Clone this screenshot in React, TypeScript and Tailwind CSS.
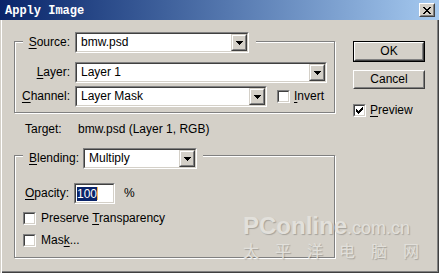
import React from "react";

function U({ c }: { c: string }) {
  return <span className="underline decoration-1 underline-offset-[2px]">{c}</span>;
}

function Arrow() {
  return (
    <svg width="7" height="4" viewBox="0 0 7 4" shapeRendering="crispEdges" fill="#000">
      <rect x="0" y="0" width="7" height="1" />
      <rect x="1" y="1" width="5" height="1" />
      <rect x="2" y="2" width="3" height="1" />
      <rect x="3" y="3" width="1" height="1" />
    </svg>
  );
}

function DropButton() {
  return (
    <div className="h-full w-[16px] shrink-0 border border-t-[#d4d0c8] border-l-[#d4d0c8] border-r-[#404040] border-b-[#404040] bg-[#d4d0c8]">
      <div className="flex h-full w-full items-center justify-center border border-t-white border-l-white border-r-[#808080] border-b-[#808080]">
        <Arrow />
      </div>
    </div>
  );
}

function Combo({ value, width }: { value: string; width: string }) {
  return (
    <div className={`h-[21px] shrink-0 border border-t-[#808080] border-l-[#808080] border-r-white border-b-white ${width}`}>
      <div className="flex h-full w-full border border-t-[#404040] border-l-[#404040] border-r-[#d4d0c8] border-b-[#d4d0c8] bg-white">
        <div className="flex-1 whitespace-nowrap pl-[4px] leading-[17px]">{value}</div>
        <DropButton />
      </div>
    </div>
  );
}

function CheckGlyph() {
  return (
    <svg width="7" height="7" viewBox="0 0 7 7" shapeRendering="crispEdges" fill="#000">
      <rect x="6" y="0" width="1" height="1" />
      <rect x="5" y="1" width="2" height="1" />
      <rect x="0" y="2" width="1" height="1" />
      <rect x="4" y="2" width="3" height="1" />
      <rect x="0" y="3" width="2" height="1" />
      <rect x="3" y="3" width="3" height="1" />
      <rect x="0" y="4" width="5" height="1" />
      <rect x="1" y="5" width="3" height="1" />
      <rect x="2" y="6" width="1" height="1" />
    </svg>
  );
}

function Checkbox({ checked }: { checked?: boolean }) {
  return (
    <div className="h-[13px] w-[13px] shrink-0 border border-t-[#808080] border-l-[#808080] border-r-white border-b-white">
      <div className="flex h-full w-full items-center justify-center border border-t-[#404040] border-l-[#404040] border-r-[#d4d0c8] border-b-[#d4d0c8] bg-white">
        {checked && <CheckGlyph />}
      </div>
    </div>
  );
}

function Face({ children }: { children: React.ReactNode }) {
  return (
    <div className="h-full w-full border border-t-white border-l-white border-r-[#404040] border-b-[#404040]">
      <div className="flex h-full w-full items-center justify-center border border-t-[#d4d0c8] border-l-[#d4d0c8] border-r-[#808080] border-b-[#808080]">
        {children}
      </div>
    </div>
  );
}

function CloseGlyph() {
  return (
    <svg width="8" height="7" viewBox="0 0 8 7" shapeRendering="crispEdges" fill="#000">
      <rect x="0" y="0" width="2" height="1" />
      <rect x="6" y="0" width="2" height="1" />
      <rect x="1" y="1" width="2" height="1" />
      <rect x="5" y="1" width="2" height="1" />
      <rect x="2" y="2" width="4" height="1" />
      <rect x="3" y="3" width="2" height="1" />
      <rect x="2" y="4" width="4" height="1" />
      <rect x="1" y="5" width="2" height="1" />
      <rect x="5" y="5" width="2" height="1" />
      <rect x="0" y="6" width="2" height="1" />
      <rect x="6" y="6" width="2" height="1" />
    </svg>
  );
}

export default function App() {
  return (
    <div className="relative flex h-[273px] w-[439px] flex-col overflow-hidden bg-[#d4d0c8] font-['Liberation_Sans',Arial,sans-serif] text-[12px] leading-[15px] text-black shadow-[inset_1px_0_0_#d4d0c8,inset_2px_0_0_#fff,inset_-1px_-1px_0_#404040,inset_-2px_-2px_0_#808080]">
      {/* Title bar */}
      <div className="flex h-[20px] shrink-0 items-center bg-linear-to-r from-[#0a246a] to-[#a6caf0] pl-[5px] pr-[4px]">
        <span className="pt-[3px] font-['Liberation_Mono',monospace] text-[12px] font-bold leading-[17px] text-white">
          Apply Image
        </span>
        <div className="ml-auto h-[14px] w-[16px] bg-[#d4d0c8]">
          <Face>
            <CloseGlyph />
          </Face>
        </div>
      </div>

      {/* Body */}
      <div className="flex flex-1 items-start pt-[21px]">
        {/* Left column */}
        <div className="flex w-[335px] shrink-0 flex-col pl-[14px]">
          {/* Source group */}
          <div className="w-[321px] border border-[#808080] pb-[5px] shadow-[inset_1px_1px_0_#fff,1px_1px_0_#fff]">
            <div className="-mt-[10px] ml-[8px] flex w-fit items-center bg-[#d4d0c8] pr-[7px]">
              <span className="w-[47px] text-right">
                <U c="S" />ource:
              </span>
              <div className="ml-[5px]">
                <Combo value="bmw.psd" width="w-[174px]" />
              </div>
            </div>
            <div className="mt-[9px] flex items-center">
              <span className="w-[55px] text-right">
                <U c="L" />ayer:
              </span>
              <div className="ml-[5px]">
                <Combo value="Layer 1" width="w-[252px]" />
              </div>
            </div>
            <div className="mt-[3px] flex items-center">
              <span className="w-[55px] text-right">
                <U c="C" />hannel:
              </span>
              <div className="ml-[5px]">
                <Combo value="Layer Mask" width="w-[192px]" />
              </div>
              <div className="ml-[10px]">
                <Checkbox />
              </div>
              <span className="ml-[4px]">
                <U c="I" />nvert
              </span>
            </div>
          </div>

          {/* Target */}
          <div className="mt-[9px] flex h-[15px] items-center pl-[11px]">
            <span className="w-[53px]">Target:</span>
            <span>bmw.psd (Layer 1, RGB)</span>
          </div>

          {/* Blending group */}
          <div className="mt-[18px] w-[321px] border border-[#808080] pb-[9px] shadow-[inset_1px_1px_0_#fff,1px_1px_0_#fff]">
            <div className="-mt-[8px] ml-[8px] flex w-fit items-center bg-[#d4d0c8] pl-[6px] pr-[6px]">
              <span className="w-[50px]">
                <U c="B" />lending:
              </span>
              <div className="ml-[4px]">
                <Combo value="Multiply" width="w-[114px]" />
              </div>
            </div>
            <div className="mt-[14px] flex items-center pl-[10px]">
              <span className="w-[49px]">
                <U c="O" />pacity:
              </span>
              <div className="h-[21px] w-[41px] border border-t-[#808080] border-l-[#808080] border-r-white border-b-white">
                <div className="flex h-full w-full items-center border border-t-[#404040] border-l-[#404040] border-r-[#d4d0c8] border-b-[#d4d0c8] bg-white pl-[1px]">
                  <span className="bg-[#0a246a] leading-[14px] text-white">100</span>
                  <span className="h-[13px] w-[1px] bg-[#f0b860]" />
                </div>
              </div>
              <span className="ml-[9px]">%</span>
            </div>
            <div className="mt-[7px] flex h-[15px] items-center pl-[8px]">
              <Checkbox />
              <span className="ml-[5px]">
                Preserve <U c="T" />ransparency
              </span>
            </div>
            <div className="mt-[7px] flex h-[15px] items-center pl-[8px]">
              <Checkbox />
              <span className="ml-[5px]">
                Mas<U c="k" />...
              </span>
            </div>
          </div>
        </div>

        {/* Right column */}
        <div className="flex flex-col pl-[18px]">
          <div className="h-[21px] w-[72px] border border-black">
            <Face>OK</Face>
          </div>
          <div className="mt-[8px] h-[19px] w-[72px]">
            <Face>Cancel</Face>
          </div>
          <div className="mt-[15px] flex h-[13px] items-center">
            <Checkbox checked />
            <span className="ml-[4px]">
              <U c="P" />review
            </span>
          </div>
        </div>
      </div>

      {/* Watermark */}
      <div className="pointer-events-none absolute left-[243px] top-[213px] flex flex-col text-[#e2e0db] [text-shadow:1px_1px_1px_rgba(0,0,0,0.22)]">
        <div className="flex items-baseline whitespace-nowrap leading-[26px]">
          <span className="text-[24px] font-bold">PConline</span>
          <span className="text-[18px]">.com.cn</span>
        </div>
        <div className="font-['Noto_Sans_CJK_SC',sans-serif] text-[16px] leading-[18px] tracking-[16px]">
          太平洋电脑网
        </div>
      </div>
    </div>
  );
}
